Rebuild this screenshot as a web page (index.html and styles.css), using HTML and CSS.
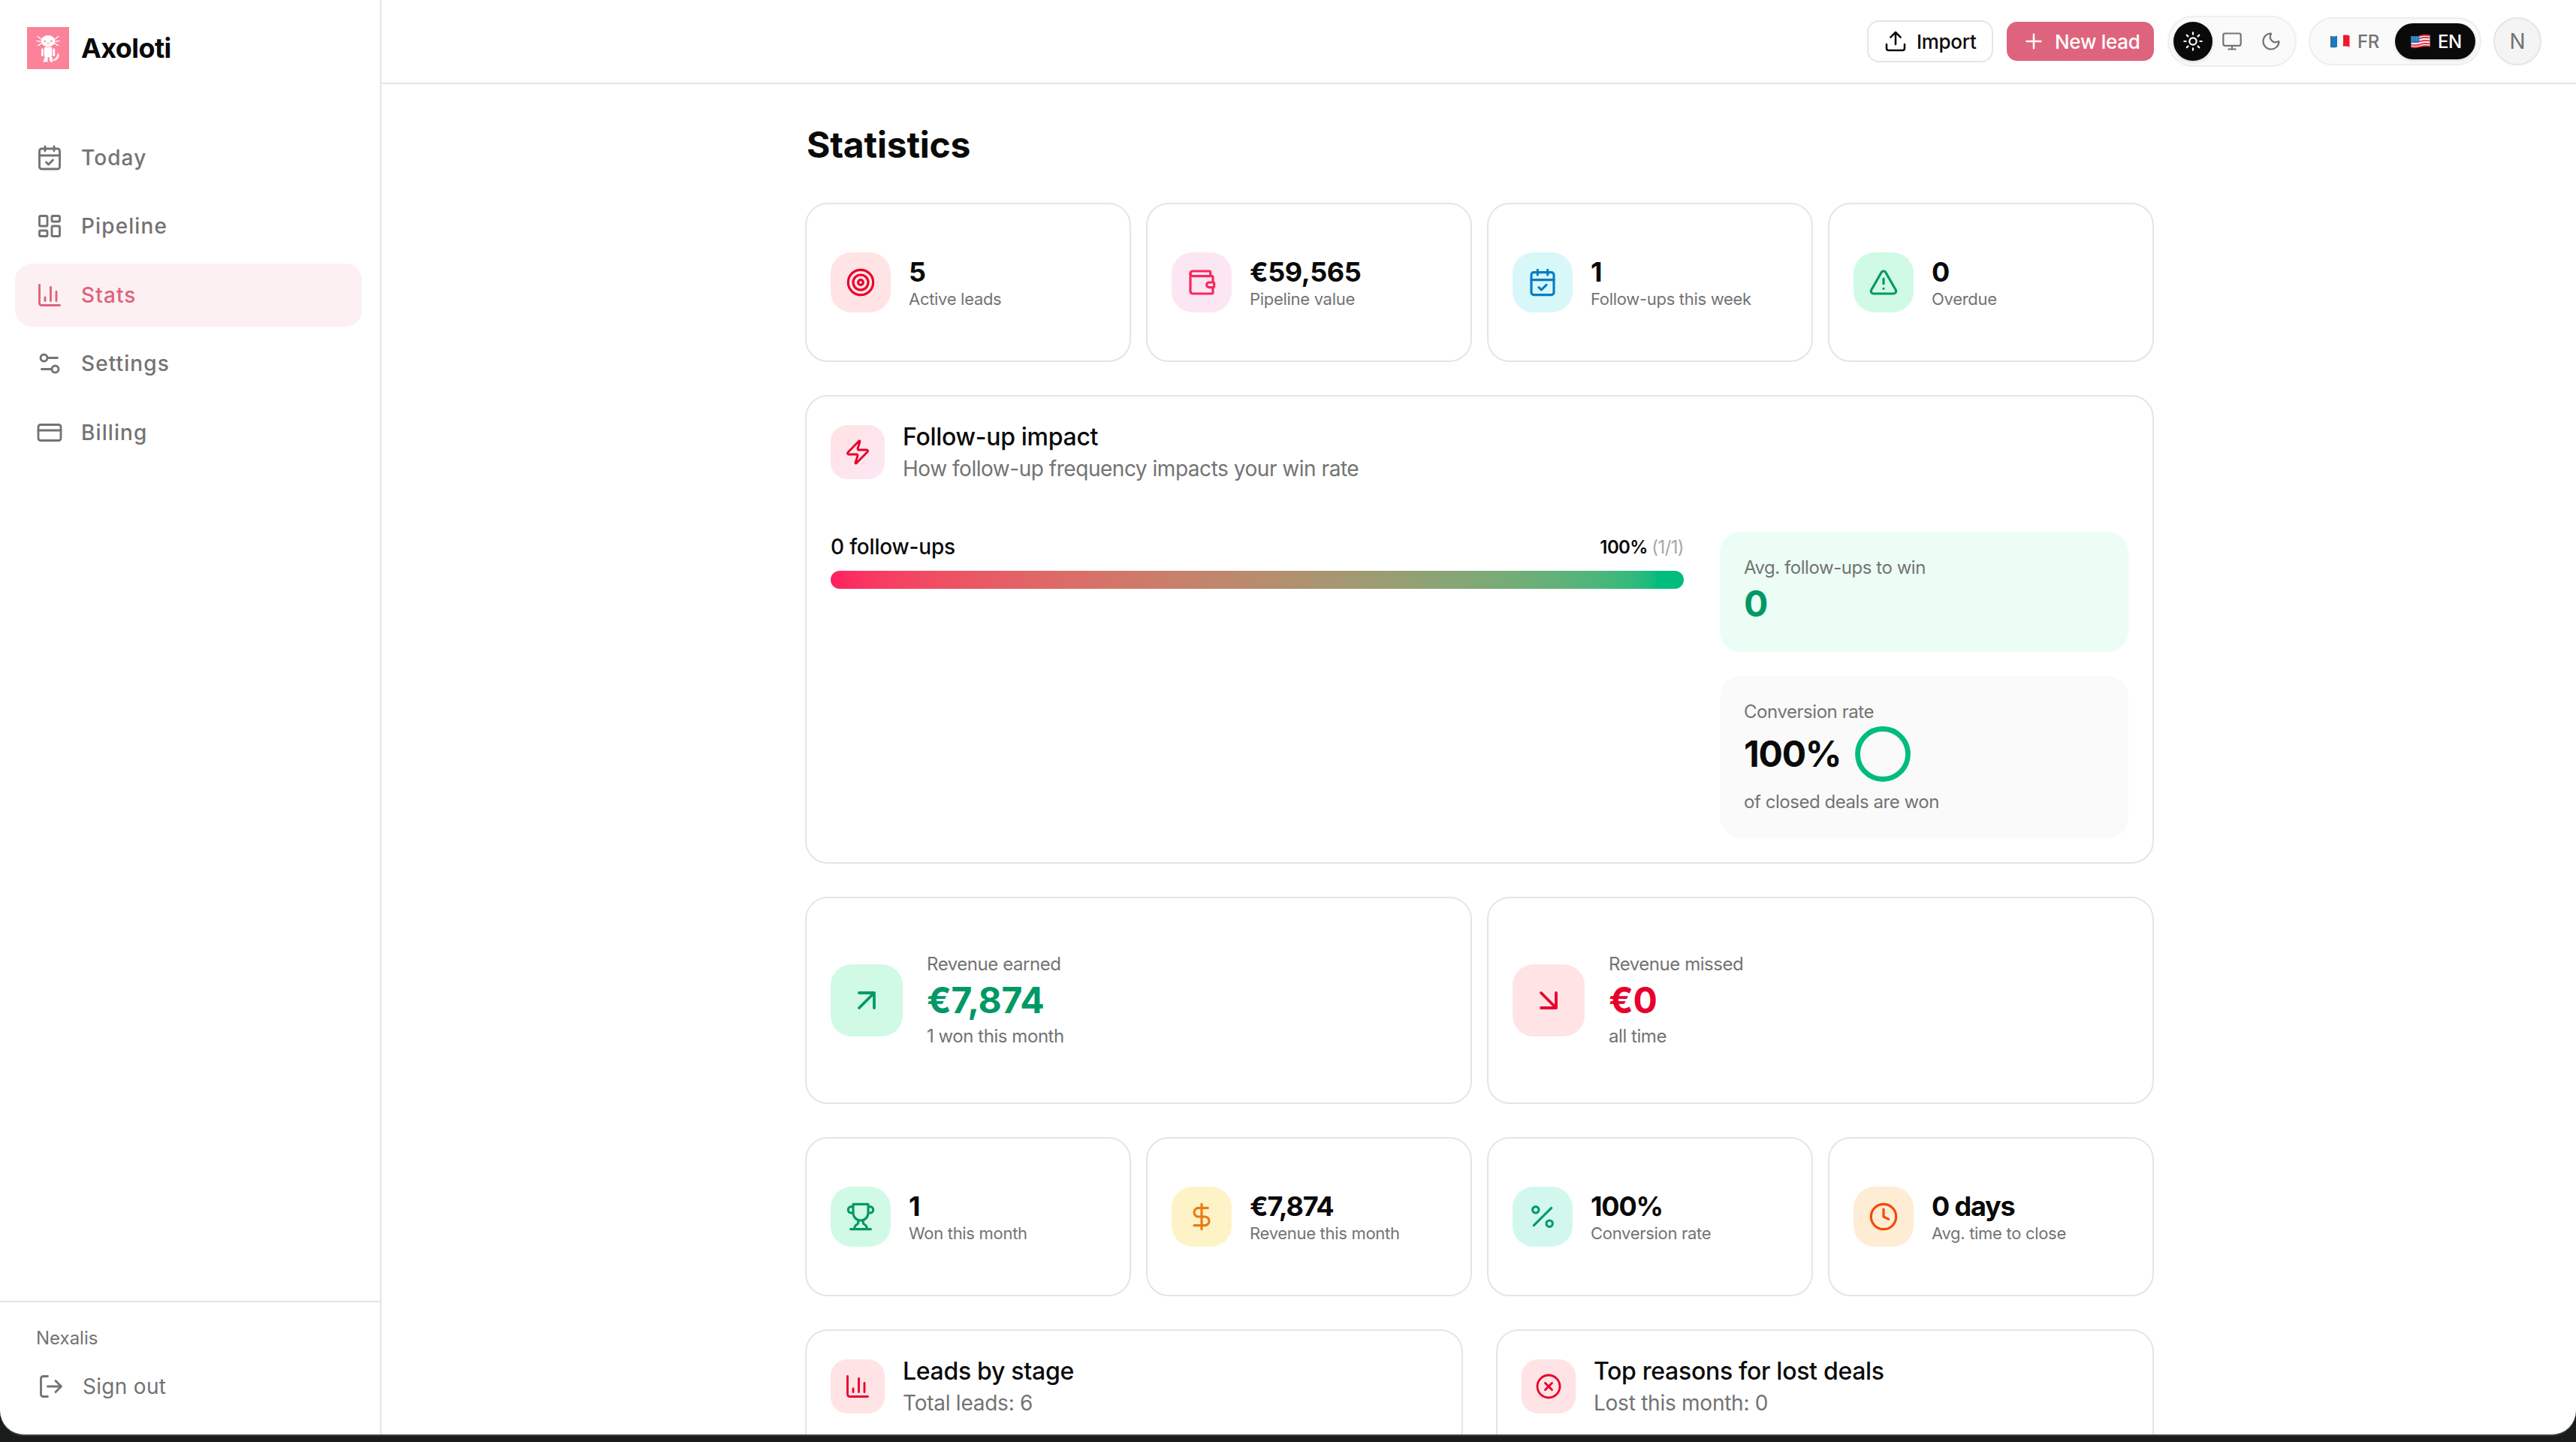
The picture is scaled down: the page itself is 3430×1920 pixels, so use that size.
FILE: index.html
```html
<!DOCTYPE html>
<html lang="en">
<head>
  <meta charset="UTF-8">
  <title>Axoloti - Statistics</title>
  <link rel="stylesheet" href="styles.css">
</head>
<body>
  <div class="window">

    <!-- Sidebar -->
    <aside class="sidebar">
      <div class="brand">
        <svg class="logo" viewBox="0 0 56 56">
          <rect width="56" height="56" fill="#fb8299"/>
          <g fill="none" stroke="#fff" stroke-width="1.7" stroke-linecap="round" opacity=".85">
            <path d="M19 16c-2 0-3-3-5-3.500M18 19c-2 0-3-.5-5-.5M19 22c-2 0-2 2.500-4.500 2.500M37 16c2 0 3-3 5-3.500M38 19c2 0 3-.5 5-.5M37 22c2 0 2 2.500 4.500 2.500"/>
            <path d="M36 43c4 0 4-5 5.500-7 1 5-2 8.500-6.500 8"/>
          </g>
          <g fill="#fff">
            <ellipse cx="28" cy="18.700" rx="9.300" ry="7.600"/>
            <rect x="22.800" y="26.500" width="10.600" height="13.500" rx="2"/>
            <rect x="19" y="28.500" width="2.700" height="10.500" rx="1.300"/>
            <rect x="34.500" y="28.500" width="2.700" height="10.500" rx="1.300"/>
            <path d="M23.500 40h4v6.500h-6zM29.500 40h4l1 6.500h-4z"/>
          </g>
          <g fill="#fb8299">
            <circle cx="23.700" cy="19" r="1.200"/>
            <circle cx="32.300" cy="19" r="1.200"/>
          </g>
          <path d="M26.500 21.500q1.500 1 3 0" fill="none" stroke="#fb8299"/>
        </svg>
        <span class="brand-name">Axoloti</span>
      </div>

      <nav class="nav">
        <a class="nav-item">
          <svg class="icon" viewBox="0 0 24 24"><path d="M8 2v4M16 2v4M3 10h18M9 16l2 2 4-4"/><rect x="3" y="4" width="18" height="18" rx="2"/></svg>
          Today
        </a>
        <a class="nav-item">
          <svg class="icon" viewBox="0 0 24 24"><rect x="3" y="3" width="7" height="9" rx="1"/><rect x="14" y="3" width="7" height="5" rx="1"/><rect x="14" y="12" width="7" height="9" rx="1"/><rect x="3" y="16" width="7" height="5" rx="1"/></svg>
          Pipeline
        </a>
        <a class="nav-item active">
          <svg class="icon" viewBox="0 0 24 24"><path d="M3 3v16a2 2 0 0 0 2 2h16M18 17V9M13 17V5M8 17v-3"/></svg>
          Stats
        </a>
        <a class="nav-item">
          <svg class="icon" viewBox="0 0 24 24"><path d="M14 17H5M19 7h-9"/><circle cx="17" cy="17" r="3"/><circle cx="7" cy="7" r="3"/></svg>
          Settings
        </a>
        <a class="nav-item">
          <svg class="icon" viewBox="0 0 24 24"><rect x="2" y="5" width="20" height="14" rx="2"/><path d="M2 10h20"/></svg>
          Billing
        </a>
      </nav>

      <div class="account">
        <div class="company">Nexalis</div>
        <a class="sign-out">
          <svg class="icon" viewBox="0 0 24 24"><path d="M16 17l5-5-5-5M21 12H9M9 21H5a2 2 0 0 1-2-2V5a2 2 0 0 1 2-2h4"/></svg>
          Sign out
        </a>
      </div>
    </aside>

    <div class="main">
      <!-- Top bar -->
      <header class="topbar">
        <button class="btn btn-outline">
          <svg class="icon" viewBox="0 0 24 24"><path d="M12 3v12M17 8l-5-5-5 5M21 15v4a2 2 0 0 1-2 2H5a2 2 0 0 1-2-2v-4"/></svg>
          Import
        </button>
        <button class="btn btn-primary">
          <svg class="icon" viewBox="0 0 24 24"><path d="M5 12h14M12 5v14"/></svg>
          New lead
        </button>
        <div class="theme-switch">
          <span class="theme selected"><svg class="icon" viewBox="0 0 24 24"><circle cx="12" cy="12" r="4"/><path d="M12 2v2M12 20v2M4.930 4.930l1.410 1.410M17.660 17.660l1.410 1.410M2 12h2M20 12h2M6.340 17.660l-1.410 1.410M19.070 4.930l-1.410 1.410"/></svg></span>
          <span class="theme"><svg class="icon" viewBox="0 0 24 24"><rect x="2" y="3" width="20" height="14" rx="2"/><path d="M8 21h8M12 17v4"/></svg></span>
          <span class="theme"><svg class="icon" viewBox="0 0 24 24"><path d="M20.985 12.486a9 9 0 1 1-9.473-9.472c.405-.022.617.46.402.803a6 6 0 0 0 8.268 8.268c.344-.215.825-.004.803.401"/></svg></span>
        </div>
        <div class="lang-switch">
          <span class="lang">
            <svg class="flag" viewBox="0 0 26 18">
              <path d="M.5 2Q5 3 9 1.800V16.500Q5 18 .5 17z" fill="#1a78c2"/>
              <path d="M9 1.800Q13 .5 17 .8V15.800Q13 15.500 9 16.500z" fill="#f7f7f7"/>
              <path d="M17 .8Q21 0 25.500 1.500V16.500Q21 15 17 15.800z" fill="#f2182c"/>
              <path d="M.5 2V17" stroke="#555"/>
            </svg>
            FR
          </span>
          <span class="lang selected">
            <svg class="flag" viewBox="0 0 26 18">
              <path d="M.5 2Q7 3.500 13 1.500T25.500 1V16Q19 14.500 13 16.500T.5 17z" fill="#f3eded"/>
              <path d="M.5 5.500q6.500 1.500 12.500-.5t12.500-.5M.5 9.500q6.500 1.500 12.500-.5t12.500-.5M.5 13.500q6.500 1.500 12.500-.5t12.500-.5M.5 16.500q6.500 1 12.500-.5t12.500-.5M12 2q6-2 13.500-.5" fill="none" stroke="#e5243b" stroke-width="1.700"/>
              <path d="M.5 2Q6 3 11.500 1.800V9.500Q6 11 .5 10.500z" fill="#1a78c2"/>
              <path d="M2 4.500h9M2 7h9" stroke="#cfe3f3" stroke-width=".8" stroke-dasharray="1 1.500"/>
            </svg>
            EN
          </span>
        </div>
        <div class="avatar">N</div>
      </header>

      <main class="content">
        <h1>Statistics</h1>

        <section class="row">
          <div class="card kpi">
            <div class="tile red"><svg class="icon" viewBox="0 0 24 24"><circle cx="12" cy="12" r="10"/><circle cx="12" cy="12" r="6"/><circle cx="12" cy="12" r="2"/></svg></div>
            <div>
              <div class="kpi-value">5</div>
              <div class="kpi-label">Active leads</div>
            </div>
          </div>
          <div class="card kpi">
            <div class="tile pink"><svg class="icon" viewBox="0 0 24 24"><path d="M19 7V4a1 1 0 0 0-1-1H5a2 2 0 0 0 0 4h15a1 1 0 0 1 1 1v4h-3a2 2 0 0 0 0 4h3a1 1 0 0 0 1-1v-2a1 1 0 0 0-1-1"/><path d="M3 5v14a2 2 0 0 0 2 2h15a1 1 0 0 0 1-1v-4"/></svg></div>
            <div>
              <div class="kpi-value kpi-pipeline">€59,565</div>
              <div class="kpi-label">Pipeline value</div>
            </div>
          </div>
          <div class="card kpi">
            <div class="tile cyan"><svg class="icon" viewBox="0 0 24 24"><path d="M8 2v4M16 2v4M3 10h18M9 16l2 2 4-4"/><rect x="3" y="4" width="18" height="18" rx="2"/></svg></div>
            <div>
              <div class="kpi-value">1</div>
              <div class="kpi-label">Follow-ups this week</div>
            </div>
          </div>
          <div class="card kpi">
            <div class="tile green"><svg class="icon" viewBox="0 0 24 24"><path d="M21.730 18l-8-14a2 2 0 0 0-3.480 0l-8 14A2 2 0 0 0 4 21h16a2 2 0 0 0 1.730-3M12 9v4M12 17h.01"/></svg></div>
            <div>
              <div class="kpi-value">0</div>
              <div class="kpi-label">Overdue</div>
            </div>
          </div>
        </section>

        <section class="card impact">
          <div class="card-head">
            <div class="tile small rose"><svg class="icon" viewBox="0 0 24 24"><path d="M4 14a1 1 0 0 1-.78-1.630l9.900-10.200a.5.5 0 0 1 .86.46l-1.920 6.020A1 1 0 0 0 13 10h7a1 1 0 0 1 .78 1.630l-9.900 10.200a.5.5 0 0 1-.86-.46l1.920-6.020A1 1 0 0 0 11 14z"/></svg></div>
            <div>
              <h2>Follow-up impact</h2>
              <p class="subtitle impact-subtitle">How follow-up frequency impacts your win rate</p>
            </div>
          </div>
          <div class="impact-body">
            <div class="rates">
              <div class="rate-line">
                <span class="rate-name">0 follow-ups</span>
                <span class="rate-value">100% <span class="rate-count">(1/1)</span></span>
              </div>
              <div class="bar"></div>
            </div>
            <div class="panels">
              <div class="panel panel-green">
                <div class="note">Avg. follow-ups to win</div>
                <div class="big green-text">0</div>
              </div>
              <div class="panel">
                <div class="note">Conversion rate</div>
                <div class="conversion">
                  <span class="big">100%</span>
                  <svg class="ring" viewBox="0 0 80 80"><circle cx="40" cy="40" r="33.500"/></svg>
                </div>
                <div class="note">of closed deals are won</div>
              </div>
            </div>
          </div>
        </section>

        <section class="row">
          <div class="card revenue">
            <div class="tile large green"><svg class="icon" viewBox="0 0 24 24"><path d="M7 7h10v10M7 17L17 7"/></svg></div>
            <div>
              <div class="note">Revenue earned</div>
              <div class="big money green-text">€7,874</div>
              <div class="note">1 won this month</div>
            </div>
          </div>
          <div class="card revenue">
            <div class="tile large red"><svg class="icon" viewBox="0 0 24 24"><path d="M7 7l10 10M17 7v10H7"/></svg></div>
            <div>
              <div class="note">Revenue missed</div>
              <div class="big money red-text">€0</div>
              <div class="note">all time</div>
            </div>
          </div>
        </section>

        <section class="row">
          <div class="card kpi">
            <div class="tile green"><svg class="icon" viewBox="0 0 24 24"><path d="M6 9H4.500a2.500 2.500 0 0 1 0-5H6M18 9h1.500a2.500 2.500 0 0 0 0-5H18M4 22h16M10 14.660V17c0 .55-.47.98-.97 1.210C7.850 18.750 7 20.240 7 22M14 14.660V17c0 .55.47.98.97 1.210C16.150 18.750 17 20.240 17 22M18 2H6v7a6 6 0 0 0 12 0V2z"/></svg></div>
            <div>
              <div class="kpi-value">1</div>
              <div class="kpi-label">Won this month</div>
            </div>
          </div>
          <div class="card kpi">
            <div class="tile amber"><svg class="icon" viewBox="0 0 24 24"><path d="M12 2v20M17 5H9.500a3.500 3.500 0 0 0 0 7h5a3.500 3.500 0 0 1 0 7H6"/></svg></div>
            <div>
              <div class="kpi-value">€7,874</div>
              <div class="kpi-label">Revenue this month</div>
            </div>
          </div>
          <div class="card kpi">
            <div class="tile teal"><svg class="icon" viewBox="0 0 24 24"><path d="M19 5L5 19"/><circle cx="6.500" cy="6.500" r="2.500"/><circle cx="17.500" cy="17.500" r="2.500"/></svg></div>
            <div>
              <div class="kpi-value">100%</div>
              <div class="kpi-label">Conversion rate</div>
            </div>
          </div>
          <div class="card kpi">
            <div class="tile orange"><svg class="icon" viewBox="0 0 24 24"><circle cx="12" cy="12" r="10"/><path d="M12 6v6l4 2"/></svg></div>
            <div>
              <div class="kpi-value">0 days</div>
              <div class="kpi-label">Avg. time to close</div>
            </div>
          </div>
        </section>

        <section class="row row-wide">
          <div class="card chart">
            <div class="card-head">
              <div class="tile small red"><svg class="icon" viewBox="0 0 24 24"><path d="M3 3v16a2 2 0 0 0 2 2h16M18 17V9M13 17V5M8 17v-3"/></svg></div>
              <div>
                <h2>Leads by stage</h2>
                <p class="subtitle">Total leads: 6</p>
              </div>
            </div>
          </div>
          <div class="card chart">
            <div class="card-head">
              <div class="tile small red"><svg class="icon" viewBox="0 0 24 24"><circle cx="12" cy="12" r="10"/><path d="M15 9l-6 6M9 9l6 6"/></svg></div>
              <div>
                <h2>Top reasons for lost deals</h2>
                <p class="subtitle">Lost this month: 0</p>
              </div>
            </div>
          </div>
        </section>
      </main>
    </div>
  </div>
</body>
</html>
```

FILE: styles.css
```css
* {
  box-sizing: border-box;
}
body {
  margin: 0;
  height: 1920px;
  overflow: hidden;
  background: #1a1c1b;
  color: #0a0a0a;
  font-family: Inter, "Liberation Sans", sans-serif;
  font-size: 28px;
}
h1, h2, p {
  margin: 0;
}
.window {
  display: flex;
  height: 1910px;
  overflow: hidden;
  background: #fff;
  border-radius: 0 0 32px 32px;
  box-shadow: 0 2px 0 #3b3e3d;
}
.icon {
  width: 36px;
  height: 36px;
  flex-shrink: 0;
  fill: none;
  stroke: currentColor;
  stroke-width: 1.9;
  stroke-linecap: round;
  stroke-linejoin: round;
}

/* Sidebar */
.sidebar {
  display: flex;
  flex-direction: column;
  width: 508px;
  flex-shrink: 0;
  border-right: 2px solid #e5e5e5;
}
.brand {
  display: flex;
  align-items: center;
  gap: 16px;
  padding: 36px 36px 0;
}
.logo {
  width: 56px;
  height: 56px;
}
.brand-name {
  font-size: 36px;
  font-weight: 700;
  letter-spacing: -0.6px;
}
.nav {
  display: flex;
  flex-direction: column;
  flex: 1;
  gap: 7.5px;
  padding: 75.5px 24px 0 20px;
}
.nav-item {
  display: flex;
  align-items: center;
  gap: 24px;
  height: 84px;
  padding-left: 28px;
  border-radius: 22px;
  color: #737373;
  font-size: 28px;
  font-weight: 500;
  letter-spacing: 1.1px;
}
.nav-item.active {
  background: #fcf0f2;
  color: #de637c;
}
.account {
  height: 178px;
  padding: 32px 48px 0;
  border-top: 2px solid #e5e5e5;
  color: #737373;
}
.company {
  font-size: 24px;
  line-height: 32px;
}
.sign-out {
  display: flex;
  align-items: center;
  gap: 24px;
  margin-top: 30px;
  padding-left: 2px;
  letter-spacing: 0.3px;
}

/* Top bar */
.main {
  flex: 1;
}
.topbar {
  display: flex;
  align-items: center;
  justify-content: flex-end;
  gap: 16px;
  height: 112px;
  padding-right: 46px;
  border-bottom: 2px solid #e5e5e5;
}
.btn {
  display: flex;
  align-items: center;
  gap: 12px;
  padding: 0 20px;
  border: none;
  font-family: inherit;
  font-size: 26px;
  font-weight: 500;
  letter-spacing: -0.3px;
  white-space: nowrap;
}
.btn .icon {
  width: 32px;
  height: 32px;
}
.btn-outline {
  width: 168px;
  height: 56px;
  border: 2px solid #e5e5e5;
  border-radius: 16px;
  background: #fff;
  color: #0a0a0a;
}
.btn-primary {
  width: 196px;
  height: 52px;
  margin: 0 2px;
  border-radius: 14px;
  background: #dd647c;
  color: #fff;
}
.theme-switch, .lang-switch {
  display: flex;
  padding: 6px;
  border: 2px solid #eee;
  border-radius: 34px;
  background: #fafafa;
  color: #737373;
}
.theme {
  display: flex;
  align-items: center;
  justify-content: center;
  width: 52px;
  height: 52px;
  border-radius: 50%;
}
.theme .icon {
  width: 28px;
  height: 28px;
}
.selected {
  background: #0a0a0a;
  color: #fff;
  box-shadow: 0 2px 4px rgba(0, 0, 0, 0.12);
}
.lang {
  display: flex;
  align-items: center;
  gap: 10px;
  width: 107px;
  height: 48px;
  padding-left: 21px;
  border-radius: 24px;
  font-size: 24px;
  font-weight: 500;
  letter-spacing: -0.5px;
}
.flag {
  width: 26px;
  height: 18px;
}
.avatar {
  width: 64px;
  height: 64px;
  border: 2px solid #e5e5e5;
  border-radius: 50%;
  background: #f4f4f4;
  color: #737373;
  font-size: 28px;
  line-height: 60px;
  text-align: center;
}

/* Content */
.content {
  display: flex;
  flex-direction: column;
  gap: 44px;
  width: 1796px;
  margin-left: 564px;
  padding-top: 48px;
}
h1 {
  height: 66px;
  padding-left: 2px;
  font-size: 48px;
  font-weight: 700;
  line-height: 66px;
  letter-spacing: -0.2px;
}
.row {
  display: flex;
  gap: 20px;
}
.row-wide {
  gap: 44px;
}
.card {
  flex: 1;
  border: 2px solid #e5e5e5;
  border-radius: 30px;
  background: #fff;
}
.kpi, .revenue {
  display: flex;
  align-items: center;
  gap: 24px;
  height: 212px;
  padding: 0 32px;
}
.kpi-value {
  font-size: 36px;
  font-weight: 700;
  line-height: 44px;
  letter-spacing: -1.2px;
}
.kpi-pipeline {
  letter-spacing: -0.4px;
}
.kpi-label {
  color: #737373;
  font-size: 22px;
  line-height: 28px;
  letter-spacing: -0.3px;
}
.tile {
  display: flex;
  align-items: center;
  justify-content: center;
  width: 80px;
  height: 80px;
  flex-shrink: 0;
  border-radius: 28px;
}
.tile .icon {
  width: 40px;
  height: 40px;
}
.tile.small {
  width: 72px;
  height: 72px;
  border-radius: 22px;
}
.tile.small .icon {
  width: 36px;
  height: 36px;
}
.tile.large {
  width: 96px;
  height: 96px;
}
.tile.large .icon {
  width: 48px;
  height: 48px;
}
.red { background: #ffe3e5; color: #e8002c; }
.rose { background: linear-gradient(135deg, #ffe3e5, #fce7f3); color: #e8002c; }
.pink { background: #fde6f3; color: #f8265e; }
.cyan { background: #d8f7f8; color: #0a7cc4; }
.green { background: #d0fae5; color: #009966; }
.teal { background: #d2f8ee; color: #009970; }
.amber { background: #fef3c6; color: #e87b12; }
.orange { background: #ffecd4; color: #f54900; }
.green-text { color: #009966; }
.red-text { color: #e8002c; }

/* Follow-up impact */
.impact {
  height: 624px;
  flex: none;
  padding: 32px;
}
.card-head {
  display: flex;
  align-items: center;
  gap: 24px;
  height: 84px;
}
h2 {
  font-size: 32px;
  font-weight: 500;
  line-height: 44px;
  letter-spacing: -0.3px;
}
.subtitle {
  color: #737373;
  font-size: 28px;
  line-height: 40px;
  letter-spacing: -0.25px;
}
.impact-subtitle {
  letter-spacing: -0.47px;
}
.impact-body {
  display: flex;
  gap: 48px;
  margin-top: 64px;
}
.rates {
  flex: 1;
}
.rate-line {
  display: flex;
  align-items: center;
  justify-content: space-between;
  height: 40px;
}
.rate-name {
  font-weight: 500;
  letter-spacing: -0.2px;
}
.rate-value {
  font-size: 24px;
  font-weight: 600;
  letter-spacing: -0.6px;
}
.rate-count {
  color: #a8a8a8;
  font-weight: 400;
}
.bar {
  height: 24px;
  margin-top: 12px;
  border-radius: 12px;
  background: linear-gradient(to right in oklab, #ff2060, #00bc7d 97%);
}
.panels {
  display: flex;
  flex-direction: column;
  gap: 32px;
  width: 544px;
}
.panel {
  padding: 32px;
  border-radius: 28px;
  background: #fafafa;
}
.panel-green {
  background: #ebfdf4;
}
.note {
  color: #737373;
  font-size: 24px;
  line-height: 32px;
  letter-spacing: -0.45px;
}
.big {
  font-size: 48px;
  font-weight: 700;
  line-height: 64px;
  letter-spacing: -1.2px;
}
.money {
  letter-spacing: -0.3px;
}
.conversion {
  display: flex;
  align-items: center;
  gap: 16px;
  height: 80px;
  margin-bottom: 8px;
}
.ring {
  width: 80px;
  height: 80px;
  fill: none;
  stroke: #00bc7d;
  stroke-width: 6.8;
}

.revenue {
  height: 276px;
  gap: 32px;
}
.chart {
  height: 400px;
  padding: 32px;
}
```
